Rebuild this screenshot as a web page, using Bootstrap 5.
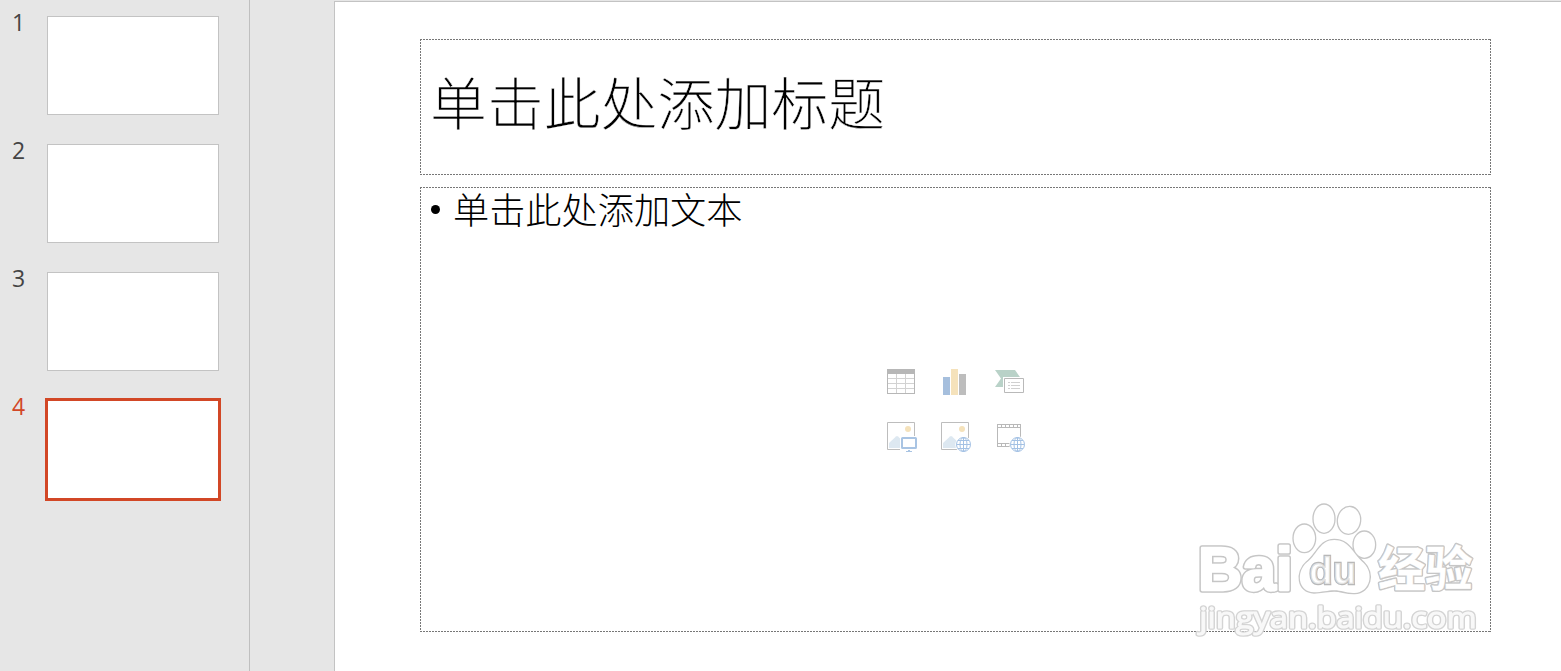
<!DOCTYPE html>
<html lang="zh-CN">

<head>
  <meta charset="UTF-8">
  <title>单击此处添加标题</title>
  <link href="https://cdn.jsdelivr.net/npm/bootstrap@5.3.2/dist/css/bootstrap.min.css" rel="stylesheet">
  <style>
    body {
      background: #e6e6e6;
      color: #000;
      font-family: "Open Sans", "Noto Sans CJK SC", sans-serif;
    }

    .painel {
      width: 250px;
      padding: 16px 0 0 12px;
      border-right: 1px solid #bfbfbf;
    }

    .miniatura {
      height: 99px;
      margin-bottom: 29px;
      color: #444;
    }

    .numero {
      width: 35px;
      font-size: 23px;
      line-height: 12px;
    }

    .folha {
      width: 172px;
      height: 99px;
      background: #fff;
      border: 1px solid #c3c3c3;
    }

    .ativa { color: #d24726; }

    .ativa .folha {
      width: 176px;
      height: 103px;
      margin: -2px;
      border: 3px solid #d24726;
    }

    .slide {
      margin: 1px 0 0 84px;
      padding: 37px 0 0 85px;
      background: #fff;
      border: solid #c3c3c3;
      border-width: 1px 0 0 1px;
    }

    /* 2px dash, 1px gap on the four sides */
    .caixa {
      width: 1071px;
      --h: repeating-linear-gradient(90deg, #777 0 2px, transparent 2px 3px);
      --v: repeating-linear-gradient(#777 0 2px, transparent 2px 3px);
      background: var(--h) 0 0 / 100% 1px, var(--h) 0 100% / 100% 1px,
        var(--v) 0 0 / 1px 100%, var(--v) 100% 0 / 1px 100%;
      background-repeat: no-repeat;
    }

    .titulo {
      height: 136px;
      margin-bottom: 12px;
      padding-left: 10px;
      font: 300 56.9px/123px "Noto Sans CJK SC", sans-serif;
      -webkit-text-stroke: .4px #fff;
    }

    .conteudo { height: 445px; }

    .texto {
      height: 181px;
      padding-left: 32px;
      font: 300 36.2px/42px "Noto Sans CJK SC", sans-serif;
    }

    .marcador {
      width: 9px;
      height: 9px;
      margin: 18px 13px 0 -21px;
      background: #000;
    }

    .icones {
      grid-template-columns: repeat(3, 32px);
      gap: 22px;
      padding-left: 466px;
    }

    .icones svg { display: block; }

    .marca { right: 61px; bottom: 26px; }
  </style>
</head>

<body class="vh-100 overflow-hidden">

  <div class="d-flex h-100">

    <div class="painel flex-shrink-0" id="painel"></div>

    <main class="slide flex-grow-1 position-relative">
      <h1 class="caixa titulo">单击此处添加标题</h1>

      <div class="caixa conteudo">
        <div class="texto d-flex"><span class="marcador rounded-circle"></span>单击此处添加文本</div>

        <div class="icones d-grid">
          <!-- table -->
          <svg width="32" height="32" shape-rendering="crispEdges">
            <path fill="#b7b7b7" d="M1 1h28v25H1z"/>
            <path fill="#d2d2d2" d="M2 6h26v19H2z"/>
            <path fill="#fff" d="M2 6h8v4H2zM11 6h8v4h-8zM20 6h8v4h-8zM2 11h8v4H2zM11 11h8v4h-8zM20 11h8v4h-8zM2 16h8v4H2zM11 16h8v4h-8zM20 16h8v4h-8zM2 21h8v4H2zM11 21h8v4h-8zM20 21h8v4h-8z"/>
          </svg>
          <!-- chart -->
          <svg width="32" height="32" shape-rendering="crispEdges">
            <path fill="#a6bfdd" d="M3 9h7v18H3z"/>
            <path fill="#f5e2bb" d="M11 1h7v26h-7z"/>
            <path fill="#bdbdbd" d="M19 6h7v21h-7z"/>
          </svg>
          <!-- smartart -->
          <svg width="32" height="32">
            <path fill="#b9d2c8" d="M1 2h20l6 8.500-6 8.500H1l6-8.500z"/>
            <path fill="#fff" d="M9 9h22v17H9z"/>
            <path fill="#fff" stroke="#b9b9b9" d="M10.500 10.500h19v14h-19z"/>
            <path stroke="#d0d0d0" d="M14 14.500h2m1 0h9M14 17.500h2m1 0h9M14 20.500h2m1 0h9"/>
          </svg>
          <!-- picture -->
          <svg width="32" height="32">
            <path fill="none" stroke="#bdbdbd" d="M1.500.500h27v27h-27z"/>
            <circle cx="22" cy="7" r="3" fill="#f5e2bb"/>
            <path fill="#dde8f1" d="M3 26v-5l7-6.500q1-.800 2 0l8 7.500v4z"/>
            <path fill="#fff" d="M14 14h18v17H14z"/>
            <rect x="16" y="16" width="14" height="10" rx=".5" fill="none" stroke="#a9c4e3" stroke-width="2"/>
            <path stroke="#a9c4e3" d="M22 28.500h2M20 29.500h6"/>
          </svg>
          <!-- online picture -->
          <svg width="32" height="32">
            <path fill="none" stroke="#bdbdbd" d="M1.500.500h27v27h-27z"/>
            <circle cx="22" cy="7" r="3" fill="#f5e2bb"/>
            <path fill="#dde8f1" d="M3 26v-5l7-6.500q1-.800 2 0l8 7.500v4z"/>
            <circle cx="23.500" cy="22.500" r="8.300" fill="#fff"/>
            <g id="globo" fill="none" stroke="#a3c1e4">
              <circle cx="23.500" cy="22.500" r="7"/>
              <ellipse cx="23.500" cy="22.500" rx="3.500" ry="7"/>
              <path d="M23.500 15.500v14M16.500 22.500h14M18 18.500h11M18 26.500h11"/>
            </g>
          </svg>
          <!-- video -->
          <svg width="32" height="32">
            <path fill="#b9b9b9" d="M3 2h24v4H3zM3 21h24v4H3z"/>
            <path fill="none" stroke="#b9b9b9" d="M3.500 5v17M26.500 5v17"/>
            <path stroke="#fff" stroke-width="2" stroke-dasharray="3 1" d="M4 4h22M4 23h22"/>
            <circle cx="23.500" cy="22.500" r="8.300" fill="#fff"/>
            <use href="#globo"/>
          </svg>
        </div>
      </div>

      <!-- watermark -->
      <svg class="marca position-absolute" width="310" height="150" viewBox="0 0 930 450">
        <defs>
          <filter id="suave" x="-5%" y="-10%" width="110%" height="120%">
            <feGaussianBlur stdDeviation="2.2"/>
          </filter>
          <g id="pata">
            <ellipse cx="343" cy="130" rx="32" ry="41"/>
            <ellipse cx="402" cy="71" rx="31" ry="42"/>
            <ellipse cx="477" cy="76" rx="33" ry="40" transform="rotate(8 477 76)"/>
            <ellipse cx="523" cy="149" rx="32" ry="39"/>
            <path d="M433 135c-43 0-50 42-82 67-34 28-28 89 21 90 25 0 40-6 61-6 22 0 34 9 61 8 47-2 59-60 27-90-35-32-44-69-88-69z"/>
          </g>
          <text id="bai" x="24" y="284" font-size="184" textLength="284" lengthAdjust="spacingAndGlyphs" font-family="Liberation Sans, sans-serif" font-weight="bold">Bai</text>
          <text id="jingyan" x="564" y="273" font-size="142" textLength="284" lengthAdjust="spacingAndGlyphs" font-family="Noto Sans CJK SC, sans-serif" font-weight="700">经验</text>
          <text id="du" x="357" y="266" font-size="116" textLength="142" lengthAdjust="spacingAndGlyphs" font-family="Liberation Sans, sans-serif" font-weight="bold">du</text>
          <text id="site" x="28" y="398" font-size="90" textLength="832" lengthAdjust="spacingAndGlyphs" font-family="Open Sans, sans-serif">jingyan.baidu.com</text>
        </defs>
        <g fill="none" stroke="#c6c6c6" stroke-linejoin="round" filter="url(#suave)">
          <use href="#pata" stroke-width="8"/>
          <use href="#bai" stroke-width="16"/>
          <use href="#jingyan" stroke-width="10"/>
          <use href="#site" stroke="#d4d4d4" stroke-width="11"/>
        </g>
        <g fill="#fff" stroke="#fff" stroke-linejoin="round">
          <use href="#pata" stroke="none"/>
          <use href="#bai" stroke-width="7"/>
          <use href="#jingyan" stroke-width="1"/>
          <use href="#site" stroke-width="3" opacity=".85"/>
        </g>
        <use href="#du" fill="none" stroke="#b8b8b8" stroke-width="7" filter="url(#suave)"/>
        <use href="#du" fill="#fff" fill-opacity=".6"/>
      </svg>
    </main>

  </div>

  <script src="https://cdn.jsdelivr.net/npm/bootstrap@5.3.2/dist/js/bootstrap.bundle.min.js"></script>
  <script>

    const total = 4;
    const atual = 4;

    function mostrarMiniaturas(){
      let painel = document.getElementById("painel");

      for (let i = 1; i <= total; i++){
        let item = document.createElement("div");
        item.className = "miniatura d-flex" + (i === atual ? " ativa" : "");
        item.innerHTML = `
          <span class="numero">${i}</span>
          <div class="folha"></div>
        `;
        painel.appendChild(item);
      }
    }

    mostrarMiniaturas();

  </script>

</body>

</html>
